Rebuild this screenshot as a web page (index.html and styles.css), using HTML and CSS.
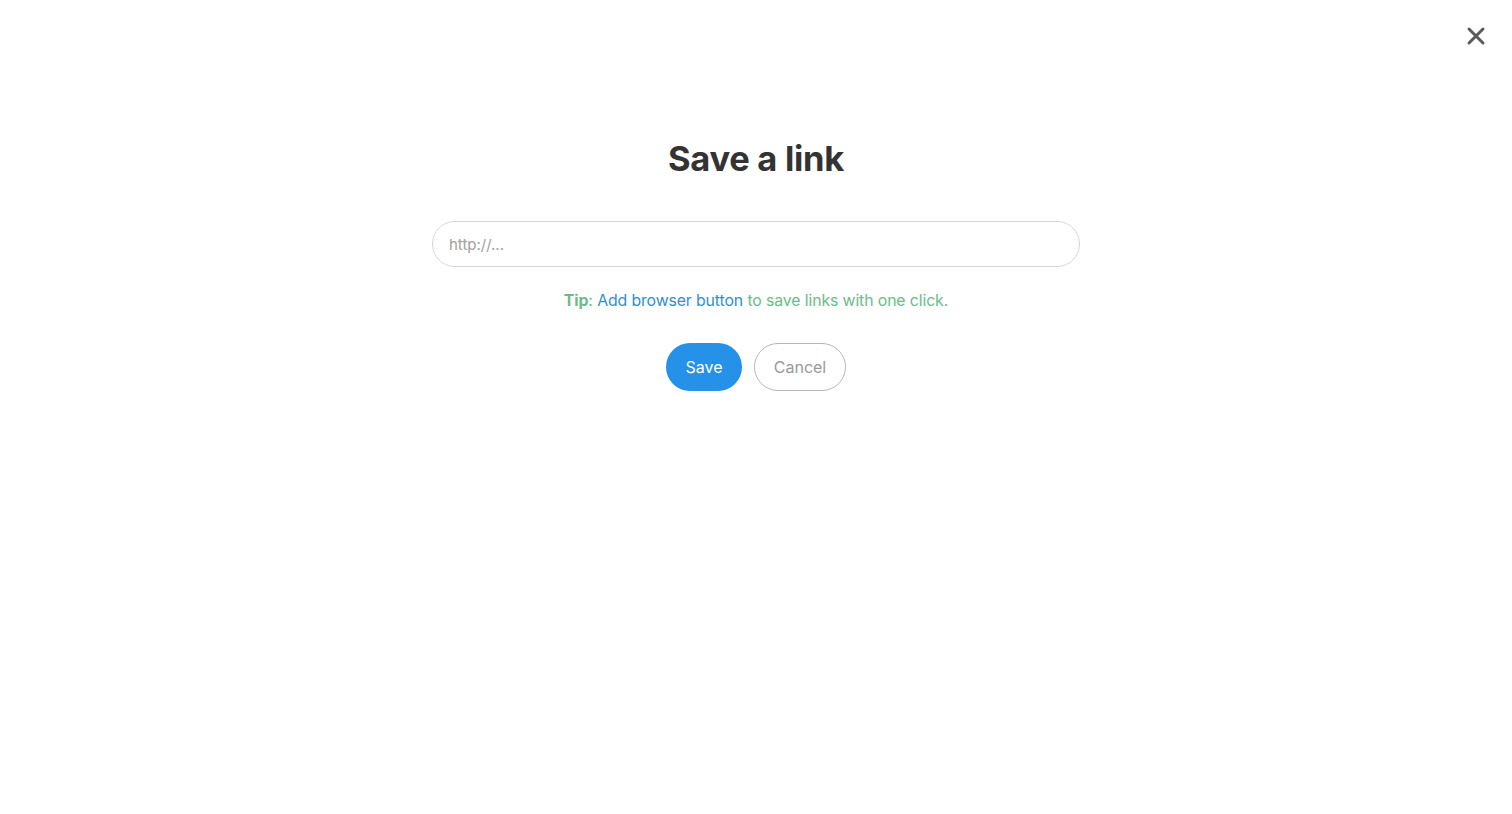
FILE: index.html
```html
<!DOCTYPE html>
<html lang="en">
<head>
  <meta charset="UTF-8">
  <meta name="viewport" content="width=device-width, initial-scale=1.0">
  <title>Save a link</title>
  <link rel="stylesheet" href="styles.css">
</head>
<body>
  <button class="close-button" aria-label="Close">
    <svg width="20" height="20" viewBox="0 0 20 20">
      <path d="M3 3 L17 17 M17 3 L3 17" stroke="#5a5a5a" stroke-width="3" stroke-linecap="round"/>
    </svg>
  </button>

  <div class="save-container">
    <h1>Save a link</h1>
    <input class="url-input" type="text" placeholder="http://..." autofocus>
    <p class="tip">
      <strong>Tip</strong>: <a href="#">Add browser button</a> to save links with one click.
    </p>
    <div class="buttons-container">
      <button class="btn btn-save">Save</button>
      <button class="btn btn-cancel">Cancel</button>
    </div>
  </div>
</body>
</html>
```

FILE: styles.css
```css
body {
  font-family: Inter, "Liberation Sans", Arial, sans-serif;
  background-color: white;
  margin: 0;
  padding: 0;
}

.close-button {
  position: absolute;
  top: 26px;
  right: 26px;
  background: none;
  border: none;
  padding: 0;
  cursor: pointer;
}

.save-container {
  display: flex;
  flex-direction: column;
  align-items: center;
  padding-top: 138px;
}

h1 {
  font-size: 34.5px;
  font-weight: 700;
  color: #333333;
  margin: 0;
  letter-spacing: -0.3px;
}

.url-input {
  margin-top: 42px;
  width: 648px;
  height: 46px;
  box-sizing: border-box;
  border: 1px solid #d6d6d6;
  border-radius: 23px;
  padding: 0 16px;
  font-family: inherit;
  font-size: 15px;
  color: #333;
  outline: none;
  caret-color: #555;
}

.url-input::placeholder {
  color: #a0a0a0;
}

.tip {
  margin: 24px 0 0;
  font-size: 15.8px;
  letter-spacing: -0.1px;
  color: #6bbb8a;
}

.tip strong {
  font-weight: 700;
}

.tip a {
  color: #2f8fd0;
  text-decoration: none;
}

.buttons-container {
  display: flex;
  gap: 12px;
  margin-top: 33px;
}

.btn {
  height: 48px;
  border-radius: 24px;
  font-family: inherit;
  font-size: 16px;
  cursor: pointer;
  box-sizing: border-box;
}

.btn-save {
  width: 76px;
  background-color: #2591e8;
  color: white;
  border: none;
}

.btn-cancel {
  width: 92px;
  background-color: white;
  color: #9a9a9a;
  border: 1px solid #b8b8b8;
}
```
